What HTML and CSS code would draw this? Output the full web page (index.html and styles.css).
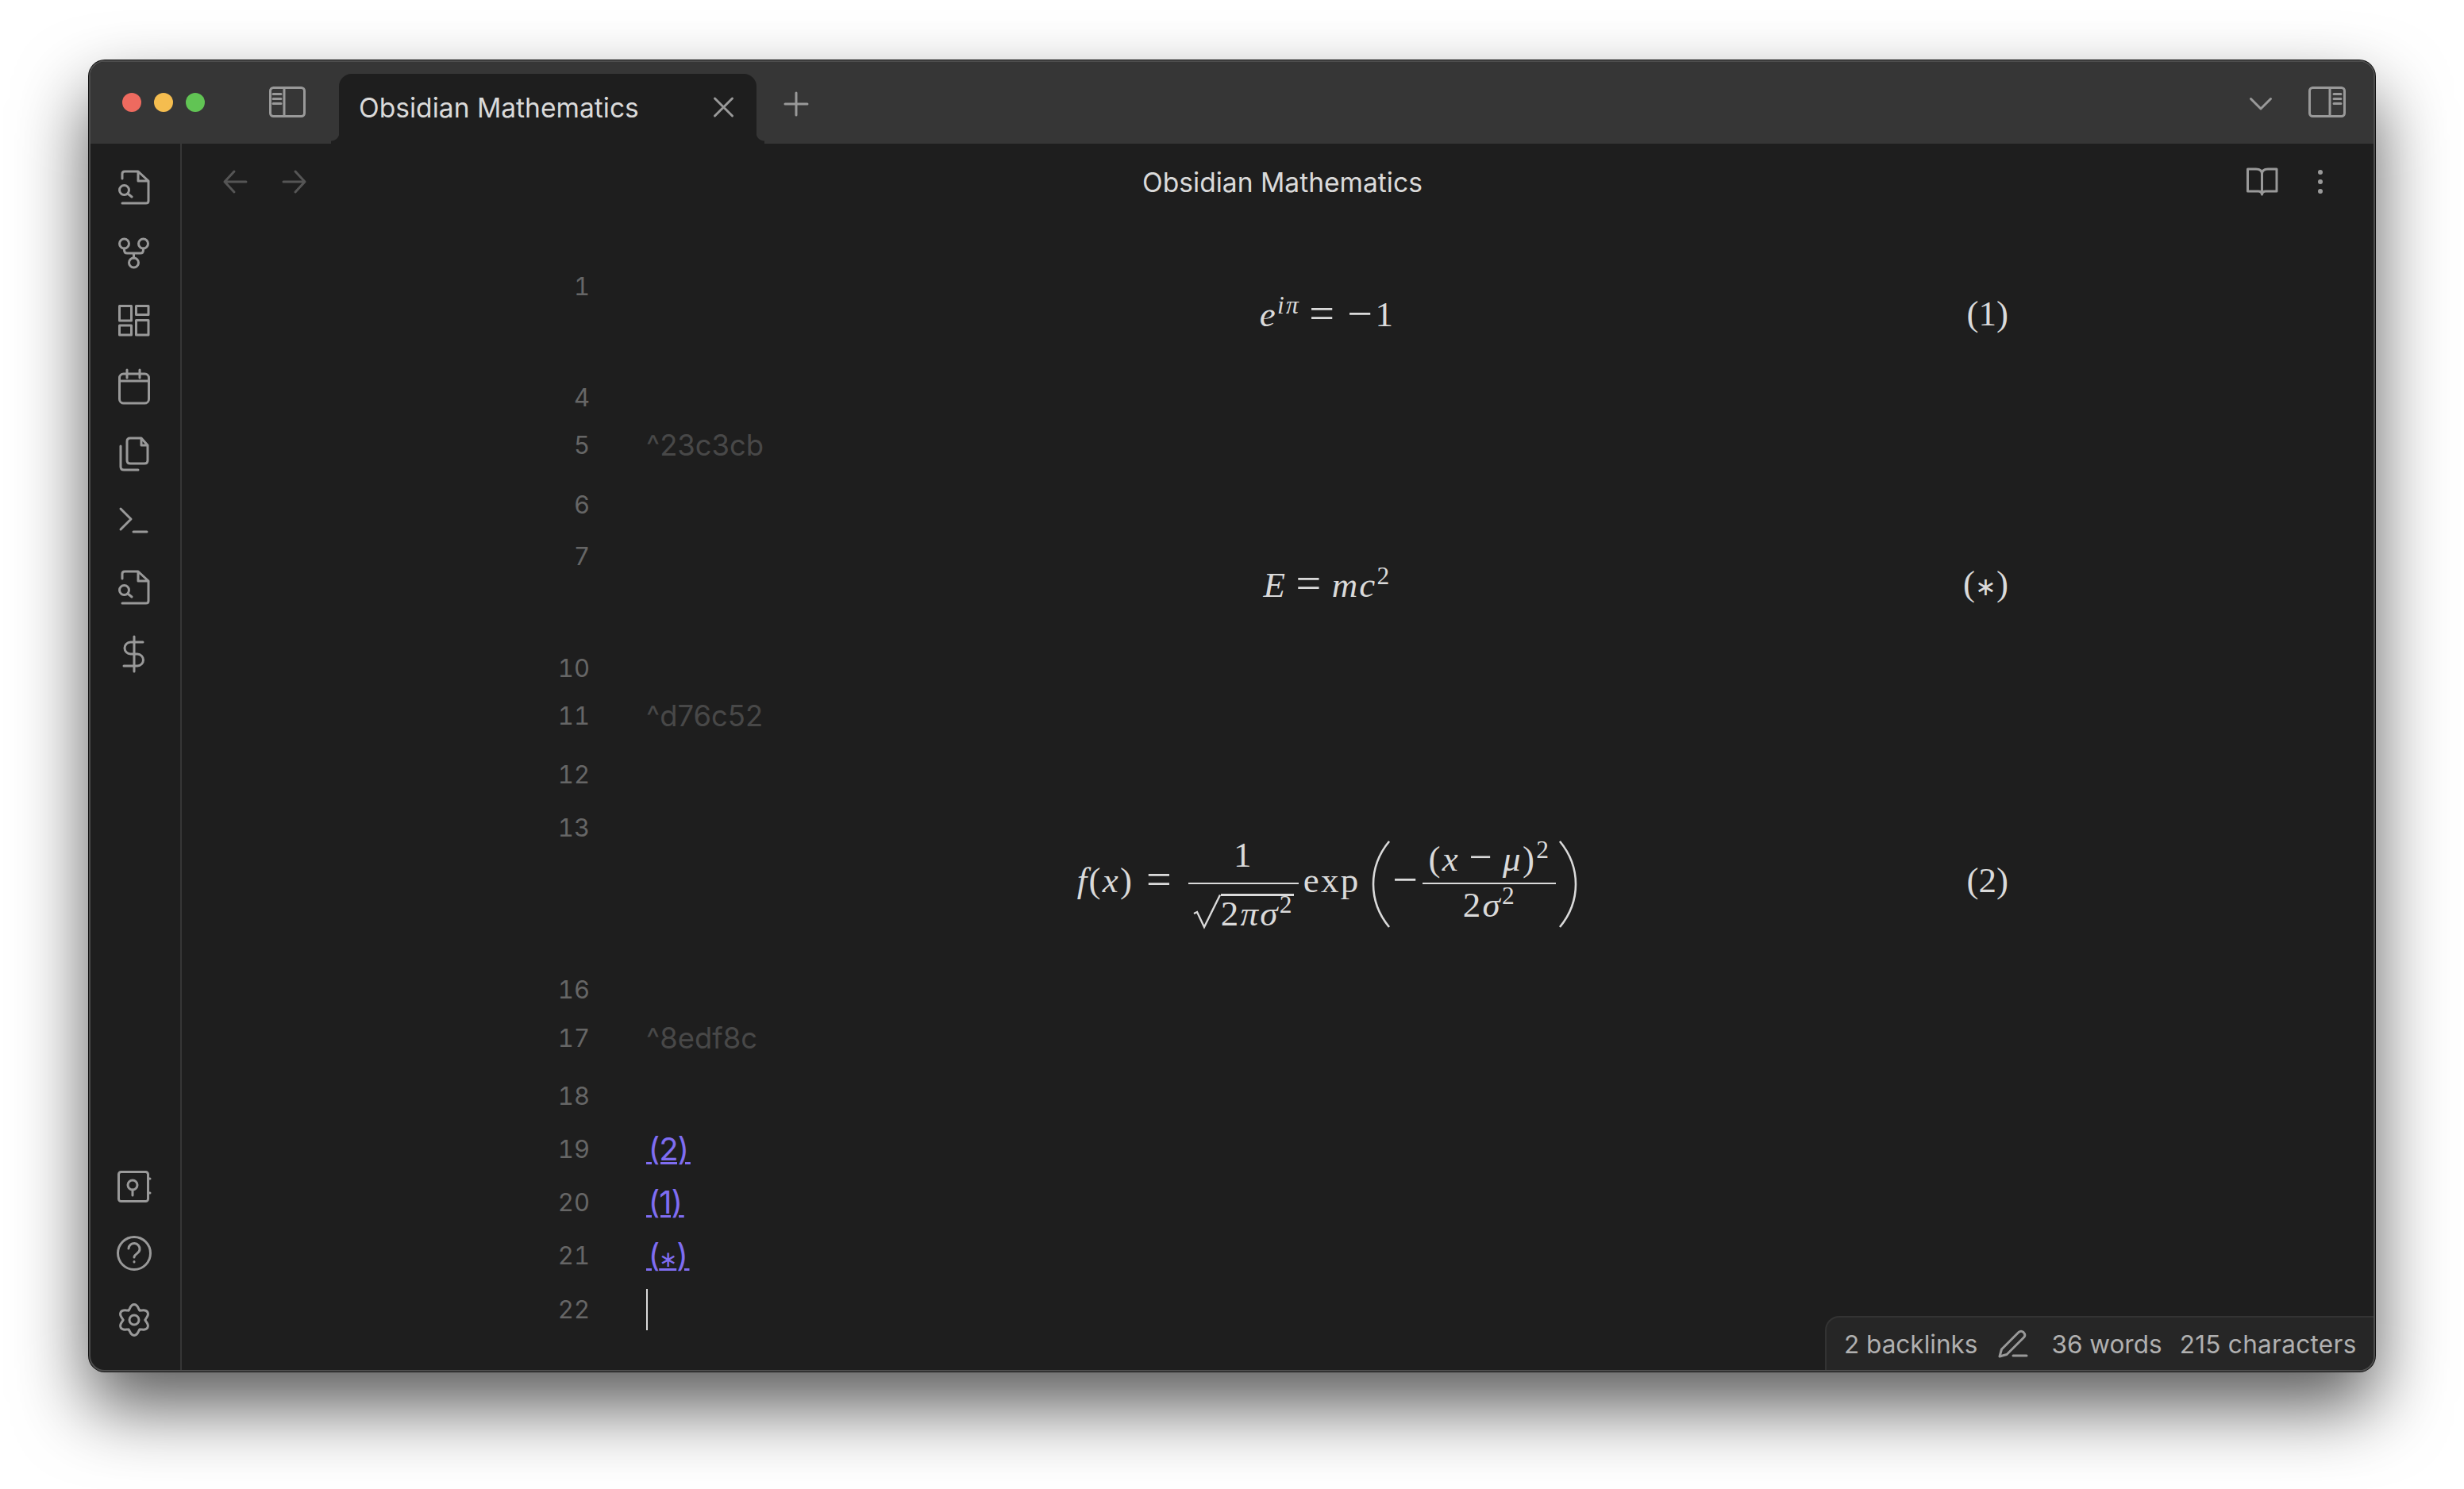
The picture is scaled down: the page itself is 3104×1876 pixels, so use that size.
FILE: index.html
```html
<!DOCTYPE html>
<html lang="en">

<head>
  <meta charset="UTF-8">
  <meta name="viewport" content="width=device-width, initial-scale=1.0">
  <title>Obsidian Mathematics</title>
  <link rel="stylesheet" href="styles.css">
</head>

<body>
  <div class="window">
    <div class="titlebar">
      <div class="lights">
        <span class="light red"></span>
        <span class="light yellow"></span>
        <span class="light green"></span>
      </div>
      <svg class="icon toggle-left" width="46" height="39" viewBox="0 0 46 39">
        <rect x="1.5" y="1.5" width="43" height="36" rx="4" />
        <path d="M19 1.5V37.5M5 9.5H15M5 15.5H15M5 21.5H15" />
      </svg>
      <div class="tab">
        <span>Obsidian Mathematics</span>
        <svg class="icon" width="25" height="24" viewBox="0 0 25 24">
          <path d="M1.5 1L23.5 23M23.5 1L1.5 23" />
        </svg>
      </div>
      <svg class="icon new-tab" width="30" height="30" viewBox="0 0 30 30">
        <path d="M15 1V29M1 15H29" />
      </svg>
      <svg class="icon chevron" width="28" height="16" viewBox="0 0 28 16">
        <path d="M1.5 1.5L14 14L26.5 1.5" />
      </svg>
      <svg class="icon toggle-right" width="47" height="39" viewBox="0 0 47 39">
        <rect x="1.5" y="1.5" width="44" height="36" rx="4" />
        <path d="M27 1.5V37.5M32 9.5H41M32 15.5H41M32 21.5H41" />
      </svg>
    </div>

    <div class="main">
      <div class="ribbon">
        <div class="ribbon-group">
          <div class="ribbon-btn">
            <svg class="icon" width="40" height="44" viewBox="0 0 40 44">
              <path d="M5 11V5Q5 2 8 2H25L38 14V39Q38 42 35 42H5M25 2V14H38M12 30L17 34" />
              <circle cx="7.5" cy="25.5" r="6" />
            </svg>
          </div>
          <div class="ribbon-btn">
            <svg class="icon" width="40" height="40" viewBox="0 0 40 40">
              <circle cx="7.5" cy="7" r="6" />
              <circle cx="31.5" cy="7" r="6" />
              <circle cx="19.5" cy="31" r="6" />
              <path d="M7.5 13V15Q7.5 19 11 19H28Q31.5 19 31.5 15V13M19.5 19V25" />
            </svg>
          </div>
          <div class="ribbon-btn">
            <svg class="icon" width="40" height="40" viewBox="0 0 40 40">
              <rect x="1.5" y="1.5" width="15" height="18.5" />
              <rect x="22.5" y="1.5" width="15.5" height="11" />
              <rect x="1.5" y="26" width="15" height="12" />
              <rect x="22.5" y="19.5" width="15.5" height="18.5" />
            </svg>
          </div>
          <div class="ribbon-btn">
            <svg class="icon" width="40" height="44" viewBox="0 0 40 44">
              <rect x="1.5" y="5" width="37" height="37" rx="5" />
              <path d="M1.5 14H38.5M11 0V10M27 0V10" />
            </svg>
          </div>
          <div class="ribbon-btn">
            <svg class="icon" width="38" height="44" viewBox="0 0 38 44">
              <path d="M10 6Q10 2 14 2H28L36 11V30Q36 34 32 34H14Q10 34 10 30ZM28 2V11H36M2 12V38Q2 42 6 42H24" />
            </svg>
          </div>
          <div class="ribbon-btn">
            <svg class="icon" width="38" height="34" viewBox="0 0 38 34">
              <path d="M2 2L15 15L2 28M18 31H35" />
            </svg>
          </div>
          <div class="ribbon-btn">
            <svg class="icon" width="40" height="44" viewBox="0 0 40 44">
              <path d="M5 11V5Q5 2 8 2H25L38 14V39Q38 42 35 42H5M25 2V14H38M12 30L17 34" />
              <circle cx="7.5" cy="25.5" r="6" />
            </svg>
          </div>
          <div class="ribbon-btn">
            <svg class="icon" width="28" height="44" viewBox="0 0 28 44">
              <path d="M14 0V44M25 7H9.5A7.5 7.5 0 0 0 9.5 22H18A7.5 7.5 0 0 1 18 37H1" />
            </svg>
          </div>
        </div>
        <div class="ribbon-group">
          <div class="ribbon-btn">
            <svg class="icon" width="42" height="40" viewBox="0 0 42 40">
              <rect x="1.5" y="1.5" width="37" height="37" rx="3" />
              <path d="M39 10H41M39 28H41M19 24V31" />
              <circle cx="19" cy="18" r="6" />
            </svg>
          </div>
          <div class="ribbon-btn">
            <svg class="icon" width="44" height="44" viewBox="0 0 44 44">
              <circle cx="22" cy="22" r="20.5" />
              <path d="M15 16A7 7 0 0 1 29 17C29 22 22 23 22 27M22 32.5V33" />
            </svg>
          </div>
          <div class="ribbon-btn">
            <svg class="icon" width="44" height="44" viewBox="-22 -22 44 44">
              <g id="gear-lobes">
                <path id="lobe" d="M-7-12.1C-5.3-13.1-5-19.5 0-19.5S5.3-13.1 7-12.1" />
                <use href="#lobe" transform="rotate(60)" />
                <use href="#lobe" transform="rotate(120)" />
                <use href="#lobe" transform="rotate(180)" />
                <use href="#lobe" transform="rotate(240)" />
                <use href="#lobe" transform="rotate(300)" />
              </g>
              <circle r="6" />
            </svg>
          </div>
        </div>
      </div>

      <div class="view">
        <div class="view-header">
          <div class="nav">
            <svg class="icon dim" width="30" height="30" viewBox="0 0 30 30">
              <path d="M29 15H2M14 2L2 15L14 28" />
            </svg>
            <svg class="icon dim" width="30" height="30" viewBox="0 0 30 30">
              <path d="M1 15H28M16 2L28 15L16 28" />
            </svg>
          </div>
          <div class="view-title">Obsidian Mathematics</div>
          <div class="view-actions">
            <svg class="icon" width="40" height="36" viewBox="0 0 40 36">
              <path d="M1.5 2H12Q19.5 2 19.5 8Q19.5 2 27 2H38V30H24Q20 30 19.5 34Q19 30 15 30H1.5ZM19.5 8V33" />
            </svg>
            <div class="dots"><span></span><span></span><span></span></div>
          </div>
        </div>

        <div class="editor">
          <div class="gutter">1</div>
          <div class="math-line">
            <span class="math"><i>e</i><sup><i>iπ</i></sup><span class="rel">=</span><span class="op">−</span>1</span>
            <span class="tag">(1)</span>
          </div>

          <div class="gutter">4</div>
          <div></div>

          <div class="gutter">5</div>
          <div class="block-id">^23c3cb</div>

          <div class="gutter">6</div>
          <div></div>

          <div class="gutter">7</div>
          <div class="math-line">
            <span class="math"><i>E</i><span class="rel">=</span><i>mc</i><sup>2</sup></span>
            <span class="tag">(<span class="ast">∗</span>)</span>
          </div>

          <div class="gutter">10</div>
          <div></div>

          <div class="gutter">11</div>
          <div class="block-id">^d76c52</div>

          <div class="gutter">12</div>
          <div></div>

          <div class="gutter">13</div>
          <div class="math-line">
            <span class="math math-tall"><i>f</i>(<i>x</i>)<span class="rel">=</span><span class="frac"><span class="num num-one">1</span><span class="den"><span class="sqrt"><svg class="surd" width="35" height="44" viewBox="0 0 35 44"><path d="M1 25L5 23L14 42L34 1.5" /></svg><span class="radicand">2<i>πσ</i><sup>2</sup></span></span></span></span><span class="fn">exp</span><svg class="paren" width="24" height="110" viewBox="0 0 24 110"><path d="M22 1C8 18 2 36 2 55C2 74 8 92 22 109" /></svg><span class="op">−</span><span class="frac"><span class="num num-wide">(<i>x</i><span class="bin">−</span><i>μ</i>)<sup>2</sup></span><span class="den den-text">2<i>σ</i><sup>2</sup></span></span><svg class="paren" width="24" height="110" viewBox="0 0 24 110"><path d="M2 1C16 18 22 36 22 55C22 74 16 92 2 109" /></svg></span>
            <span class="tag">(2)</span>
          </div>

          <div class="gutter">16</div>
          <div></div>

          <div class="gutter">17</div>
          <div class="block-id">^8edf8c</div>

          <div class="gutter">18</div>
          <div></div>

          <div class="gutter">19</div>
          <div><a class="ref" href="#">&#8202;(2)&#8202;</a></div>

          <div class="gutter">20</div>
          <div><a class="ref" href="#">&#8202;(1)&#8202;</a></div>

          <div class="gutter">21</div>
          <div><a class="ref" href="#">&#8202;(<span class="ast">∗</span>)&#8202;</a></div>

          <div class="gutter">22</div>
          <div class="caret-line"><span class="caret"></span></div>
        </div>
      </div>
    </div>

    <div class="status-bar">
      <span>2 backlinks</span>
      <svg class="icon pen" width="38" height="36" viewBox="0 0 38 36">
        <path d="M2 34L4.5 25L26 3.5Q29 1 32 3.5Q35 6.5 33 9.5L11 31.5ZM19 33H36" />
      </svg>
      <span class="words">36 words</span>
      <span class="chars">215 characters</span>
    </div>
  </div>
</body>

</html>
```

FILE: styles.css
```css
* {
  box-sizing: border-box;
  margin: 0;
  padding: 0;
}

html,
body {
  height: 100%;
}

body {
  background: #fff;
  padding: 76px 0 0 112px;
  font-family: Inter, "Liberation Sans", sans-serif;
}

.window {
  position: relative;
  width: 2880px;
  height: 1652px;
  background: #1e1e1e;
  border: 2px solid #4d4d4d;
  border-radius: 20px;
  box-shadow: 0 0 0 1px #111, 0 44px 90px rgba(0, 0, 0, 0.65);
  overflow: hidden;
  display: flex;
  flex-direction: column;
}

.icon {
  flex: none;
  fill: none;
  stroke: #999;
  stroke-width: 3;
  stroke-linecap: round;
  stroke-linejoin: round;
  overflow: visible;
}

.icon.dim {
  stroke: #555;
}

/* title bar */
.titlebar {
  height: 103px;
  flex: none;
  display: flex;
  align-items: center;
  background: #363636;
}

.lights {
  display: flex;
  gap: 16px;
  margin: 0 0 2px 40px;
}

.light {
  width: 24px;
  height: 24px;
  border-radius: 50%;
}

.red { background: #ee6a5f; }
.yellow { background: #f5bd4f; }
.green { background: #61c454; }

.toggle-left {
  margin: 0 0 2px 81px;
}

.tab {
  position: relative;
  align-self: stretch;
  width: 526px;
  margin: 15px 0 0 42px;
  padding: 0 29px 4px 25px;
  display: flex;
  align-items: center;
  justify-content: space-between;
  background: #1e1e1e;
  border-radius: 16px 16px 0 0;
  color: #dadada;
  font-size: 33.6px;
}

.tab::before,
.tab::after {
  content: "";
  position: absolute;
  bottom: 0;
  width: 10px;
  height: 14px;
}

.tab::before {
  left: -10px;
  background: radial-gradient(circle at 0 0, transparent 10px, #1e1e1e 11px);
}

.tab::after {
  right: -10px;
  background: radial-gradient(circle at 100% 0, transparent 10px, #1e1e1e 11px);
}

.new-tab {
  margin: 2px 0 0 35px;
}

.chevron {
  margin: 2px 0 0 auto;
}

.toggle-right {
  margin: 0 35px 2px 46px;
}

/* ribbon */
.main {
  flex: 1;
  min-height: 0;
  display: flex;
}

.ribbon {
  width: 115px;
  flex: none;
  display: flex;
  flex-direction: column;
  justify-content: space-between;
  padding: 13px 4px 21px 0;
  border-right: 2px solid #363636;
}

.ribbon-btn {
  height: 84px;
  display: flex;
  align-items: center;
  justify-content: center;
}

/* view */
.view {
  flex: 1;
  min-width: 0;
  display: flex;
  flex-direction: column;
}

.view-header {
  height: 96px;
  flex: none;
  display: grid;
  grid-template-columns: 1fr auto 1fr;
  align-items: center;
  padding: 0 40px 0 52px;
}

.nav {
  display: flex;
  gap: 45px;
}

.view-title {
  color: #dadada;
  font-size: 33.6px;
}

.view-actions {
  display: flex;
  justify-content: flex-end;
  align-items: center;
  gap: 50px;
  padding-right: 24px;
}

.dots {
  display: flex;
  flex-direction: column;
  gap: 5.5px;
}

.dots span {
  width: 6.5px;
  height: 6.5px;
  border-radius: 50%;
  background: #999;
}

/* editor rows, one track per source line */
.editor {
  flex: 1;
  padding: 54px 0 0 414px;
  display: grid;
  grid-template-columns: 100px 1716px;
  grid-template-rows: 140px 60px 75px 65px 141px 60px 74px 67px 204px 61px 73px 67px 67px 67px 68px 60px;
  column-gap: 71px;
  align-content: start;
}

.gutter {
  color: #666;
  font-size: 31px;
  font-variant-numeric: tabular-nums;
  line-height: 60px;
  text-align: right;
}

.block-id {
  color: #484848;
  font-size: 36.4px;
  line-height: 60px;
}

.ref {
  color: #7f6df2;
  font-size: 40px;
  line-height: 60px;
  letter-spacing: -1px;
  text-decoration-thickness: 3px;
}

.ast {
  font-size: 0.7em;
}

.caret-line {
  height: 60px;
  display: flex;
  align-items: center;
}

.caret {
  width: 2px;
  height: 52px;
  background: #dadada;
}

/* math */
.math-line {
  display: grid;
  grid-template-columns: 1fr auto 1fr;
  align-items: center;
  padding-bottom: 9px;
  color: #dadada;
  font-family: "Liberation Serif", serif;
  font-size: 45px;
  line-height: 1;
}

.math {
  grid-column: 2;
  white-space: nowrap;
  letter-spacing: 0.05em;
}

.math-tall {
  padding-top: 6px;
}

.math-tall .rel {
  margin: 0 0.28em;
}

.tag {
  grid-column: 3;
  justify-self: end;
  margin-bottom: 3px;
}

.math sup {
  font-size: 0.7em;
  line-height: 0;
  vertical-align: 0.5em;
}

.rel {
  margin: 0 0.2em;
  font-size: 1.25em;
  line-height: 0;
  vertical-align: -0.05em;
}

.op {
  margin: 0 0.02em 0 0.05em;
  font-size: 1.25em;
  line-height: 0;
  vertical-align: -0.05em;
}

.bin {
  margin: 0 0.22em;
  font-size: 1.15em;
  line-height: 0;
}

.fn {
  margin: 0 14px 0 3px;
}

.paren {
  vertical-align: middle;
  stroke: #dadada;
  fill: none;
  stroke-width: 2.6;
}

.frac {
  display: inline-flex;
  flex-direction: column;
  align-items: stretch;
  vertical-align: middle;
  margin: 0 3px;
}

.num {
  height: 56px;
  display: flex;
  align-items: flex-end;
  justify-content: center;
  border-bottom: 2px solid #dadada;
  padding-bottom: 12px;
}

.num-wide {
  display: block;
  padding: 2px 7px 0;
  line-height: 1;
  text-align: center;
}

.den {
  height: 56px;
  padding: 12px 6px 0;
}

.den-text {
  padding-top: 4px;
  text-align: center;
}

.sqrt {
  display: flex;
}

.surd {
  flex: none;
  fill: none;
  stroke: #dadada;
  stroke-width: 2.4;
  overflow: visible;
}

.radicand {
  border-top: 3px solid #dadada;
  white-space: nowrap;
}

/* status bar */
.status-bar {
  position: absolute;
  right: 0;
  bottom: 0;
  width: 691px;
  height: 68px;
  display: flex;
  align-items: center;
  padding-left: 22px;
  background: #262626;
  border-top: 2px solid #333;
  border-left: 2px solid #333;
  border-top-left-radius: 18px;
  color: #b0b0b0;
  font-size: 31.5px;
}

.pen {
  margin-left: 26px;
}

.words {
  margin-left: 29px;
}

.chars {
  margin-left: 22px;
  letter-spacing: 0.3px;
}
```
